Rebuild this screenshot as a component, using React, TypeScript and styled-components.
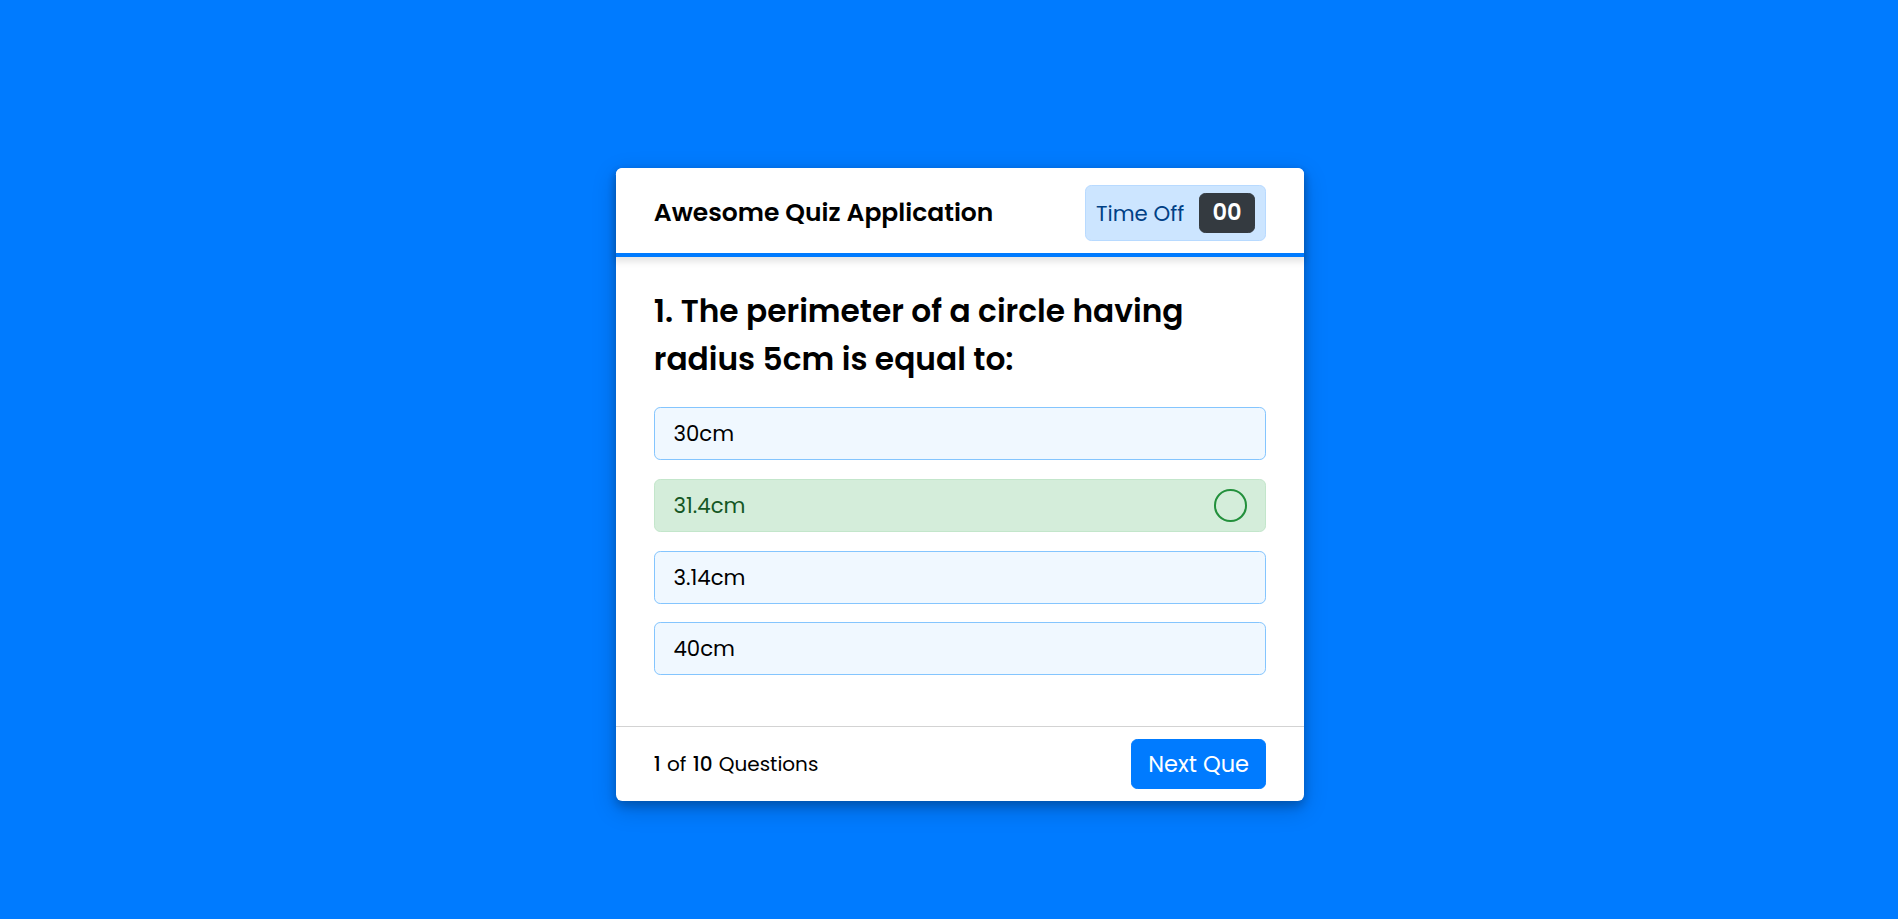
import React from 'react';
import styled, { createGlobalStyle } from 'styled-components';

const GlobalStyle = createGlobalStyle`
  * {
    margin: 0;
    padding: 0;
    box-sizing: border-box;
  }
  html, body {
    height: 100%;
  }
  body {
    background: #007bff;
    font-family: 'Poppins', 'Inter', 'Noto Sans', sans-serif;
    color: #000;
  }
`;

const Page = styled.div`
  min-height: 100vh;
  display: flex;
  justify-content: center;
  align-items: center;
  padding: 50px 0 0 22px;
`;

const QuizBox = styled.div`
  width: 687.5px;
  background: #fff;
  border-radius: 6.25px;
  box-shadow: 0 5px 10px 0 rgba(0, 0, 0, 0.2), 0 7.5px 25px 0 rgba(0, 0, 0, 0.19);
`;

const Header = styled.header`
  position: relative;
  z-index: 2;
  height: 89px;
  padding: 2px 37.5px 0;
  background: #fff;
  border-radius: 6.25px 6.25px 0 0;
  display: flex;
  align-items: center;
  justify-content: space-between;
  box-shadow: 0 3.75px 6.25px 1.25px rgba(0, 0, 0, 0.1);
`;

const Title = styled.div`
  font-size: 25px;
  font-weight: 600;
`;

const Timer = styled.div`
  width: 181.25px;
  height: 56.25px;
  padding: 0 10px;
  color: #004085;
  background: #cce5ff;
  border: 1.25px solid #b8daff;
  border-radius: 6.25px;
  display: flex;
  align-items: center;
  justify-content: space-between;
`;

const TimeLabel = styled.span`
  font-size: 21.25px;
  font-weight: 400;
`;

const TimeSec = styled.span`
  width: 56.25px;
  height: 40px;
  line-height: 37.5px;
  font-size: 22.5px;
  font-weight: 600;
  text-align: center;
  color: #fff;
  background: #343a40;
  border: 1.25px solid #343a40;
  border-radius: 6.25px;
`;

const TimeLine = styled.div`
  position: absolute;
  left: 0;
  bottom: 0;
  height: 3.75px;
  background: #007bff;
`;

const Section = styled.section`
  padding: 31.25px 37.5px 25px;
  background: #fff;
`;

const Question = styled.div`
  font-size: 31.25px;
  font-weight: 600;
  line-height: 47.5px;
`;

const OptionList = styled.div`
  padding: 24px 0 26px;
  display: flex;
  flex-direction: column;
  gap: 18.75px;
`;

const Option = styled.div<{ $correct?: boolean }>`
  height: 53px;
  padding: 0 18.75px;
  font-size: 21.25px;
  border-radius: 6.25px;
  display: flex;
  align-items: center;
  justify-content: space-between;
  color: ${p => (p.$correct ? '#155724' : '#000')};
  background: ${p => (p.$correct ? '#d4edda' : 'aliceblue')};
  border: 1.25px solid ${p => (p.$correct ? '#c3e6cb' : '#84c5fe')};
`;

const TickIcon = styled.span`
  width: 32.5px;
  height: 32.5px;
  border: 2.5px solid #23903c;
  border-radius: 50%;
  background: #d4edda;
`;

const Footer = styled.footer`
  height: 75px;
  padding: 0 37.5px;
  display: flex;
  align-items: center;
  justify-content: space-between;
  border-top: 1.25px solid lightgrey;
`;

const TotalQue = styled.span`
  display: flex;
  font-size: 20px;
  font-weight: 400;
`;

const Num = styled.p`
  font-weight: 500;
  padding: 0 6.25px;

  &:first-child {
    padding-left: 0;
  }
`;

const NextButton = styled.button`
  height: 50px;
  padding: 0 16.25px;
  font-family: inherit;
  font-size: 22.5px;
  font-weight: 400;
  color: #fff;
  background: #007bff;
  border: 1.25px solid #007bff;
  border-radius: 6.25px;
  cursor: pointer;
`;

const options = [
  { text: '30cm', correct: false },
  { text: '31.4cm', correct: true },
  { text: '3.14cm', correct: false },
  { text: '40cm', correct: false },
];

const App: React.FC = () => {
  const timeProgress = 100;

  return (
    <>
      <GlobalStyle />
      <Page>
        <QuizBox>
          <Header>
            <Title>Awesome Quiz Application</Title>
            <Timer>
              <TimeLabel>Time Off</TimeLabel>
              <TimeSec>00</TimeSec>
            </Timer>
            <TimeLine style={{ width: `${timeProgress}%` }} />
          </Header>

          <Section>
            <Question>1. The perimeter of a circle having radius 5cm is equal to:</Question>
            <OptionList>
              {options.map(o => (
                <Option key={o.text} $correct={o.correct}>
                  <span>{o.text}</span>
                  {o.correct && <TickIcon />}
                </Option>
              ))}
            </OptionList>
          </Section>

          <Footer>
            <TotalQue>
              <Num>1</Num> of <Num>10</Num> Questions
            </TotalQue>
            <NextButton>Next Que</NextButton>
          </Footer>
        </QuizBox>
      </Page>
    </>
  );
};

export default App;
